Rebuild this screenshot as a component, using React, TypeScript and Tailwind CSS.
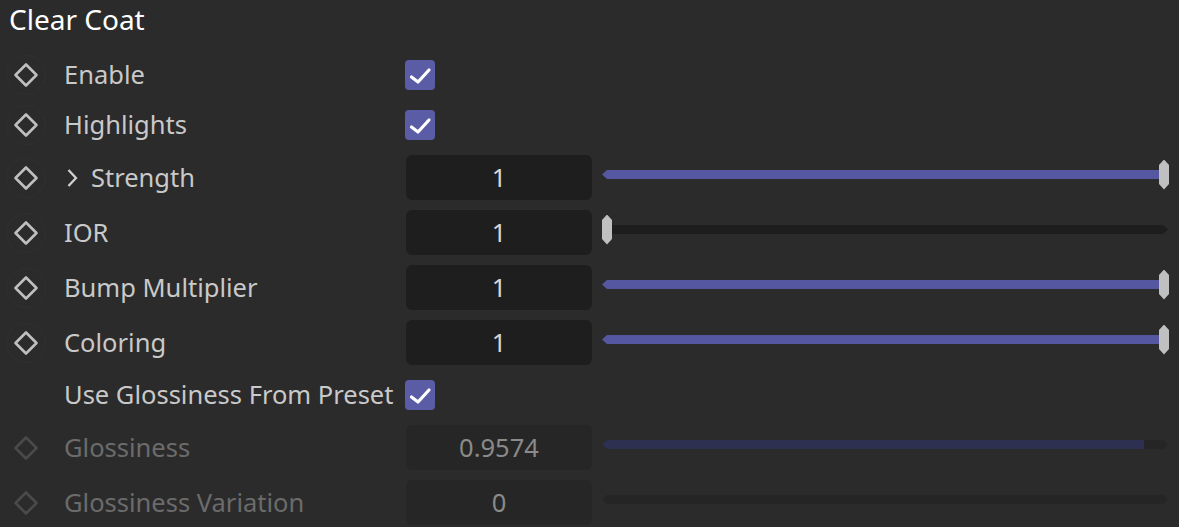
import React from "react";

type Row =
  | { kind: "check"; label: string; icon: boolean }
  | { kind: "num"; label: string; value: string; v: number; disabled?: boolean; chevron?: boolean };

const rows: Row[] = [
  { kind: "check", label: "Enable", icon: true },
  { kind: "check", label: "Highlights", icon: true },
  { kind: "num", label: "Strength", value: "1", v: 1, chevron: true },
  { kind: "num", label: "IOR", value: "1", v: 0 },
  { kind: "num", label: "Bump Multiplier", value: "1", v: 1 },
  { kind: "num", label: "Coloring", value: "1", v: 1 },
  { kind: "check", label: "Use Glossiness From Preset", icon: false },
  { kind: "num", label: "Glossiness", value: "0.9574", v: 0.9574, disabled: true },
  { kind: "num", label: "Glossiness Variation", value: "0", v: 0, disabled: true },
];

function KeyIcon({ disabled }: { disabled?: boolean }) {
  return (
    <div
      className={`w-[40px] h-[40px] rounded-full border flex items-center justify-center ${
        disabled ? "border-transparent" : "border-[#303030]"
      }`}
    >
      <svg width="26" height="26" viewBox="0 0 26 26">
        <path
          d="M13 2.5 L23.5 13 L13 23.5 L2.5 13 Z"
          fill="none"
          stroke={disabled ? "#4a4a4a" : "#bfbfbf"}
          strokeWidth="2.6"
          strokeLinejoin="round"
        />
      </svg>
    </div>
  );
}

function Check() {
  return (
    <div className="w-[30px] h-[30px] rounded-[4px] bg-[#5a5da6] flex items-center justify-center">
      <svg width="30" height="30" viewBox="0 0 30 30">
        <path d="M6.5 17 L13 22 L24 10" fill="none" stroke="#ffffff" strokeWidth="3.2" strokeLinecap="round" strokeLinejoin="round" />
      </svg>
    </div>
  );
}

function Slider({ v, disabled }: { v: number; disabled?: boolean }) {
  return (
    <div className="relative flex-1 h-[30px] mb-[6px] flex items-center">
      <div
        className={`relative w-full h-[9px] overflow-hidden [clip-path:polygon(5px_0,calc(100%-5px)_0,100%_50%,calc(100%-5px)_100%,5px_100%,0_50%)] ${
          disabled ? "bg-[#252525]" : "bg-[#1e1e1e]"
        }`}
      >
        <div
          className={`h-full ${disabled ? "bg-[#2e3052]" : "bg-[#5558a0]"}`}
          style={{ width: `${v * 100}%` }}
        />
      </div>
      {!disabled && (
        <div
          className="absolute top-0 w-[10px] h-[30px] bg-[#c0c0c0] [clip-path:polygon(50%_0,100%_18%,100%_82%,50%_100%,0_82%,0_18%)]"
          style={{ left: `calc(${v * 100}% - ${v * 9}px)` }}
        />
      )}
    </div>
  );
}

export default function App() {
  return (
    <div
      className="w-[1179px] h-[527px] overflow-hidden bg-[#2b2b2b] text-[#c9c9c9]"
      style={{ fontFamily: '"Noto Sans", "Open Sans", sans-serif' }}
    >
      <div className="h-[50px] pl-[9px] text-[28px] leading-[38px] text-white">Clear Coat</div>
      {rows.map((r, i) => {
        const disabled = r.kind === "num" && r.disabled;
        const h = r.kind === "check" ? "h-[50px]" : "h-[55px]";
        return (
          <div key={i} className={`flex items-center ${h} pr-[11px]`}>
            <div className="w-[52px] pl-[6px] flex items-center">
              {(r.kind === "num" || r.icon) && <KeyIcon disabled={disabled} />}
            </div>
            <div
              className={`w-[353px] pl-[12px] flex items-center text-[25.5px] leading-none ${
                disabled ? "text-[#6b6b6b]" : "text-[#c9c9c9]"
              }`}
            >
              {r.kind === "num" && r.chevron && (
                <svg width="14" height="22" viewBox="0 0 14 22" className="mr-[12px] ml-[1px]">
                  <path d="M3.5 3 L11 11 L3.5 19" fill="none" stroke="#d0d0d0" strokeWidth="2.3" />
                </svg>
              )}
              <span className="whitespace-nowrap">{r.label}</span>
            </div>
            {r.kind === "check" ? (
              <Check />
            ) : (
              <div className="flex-1 flex items-center gap-[10px]">
                <div
                  className={`w-[186px] h-[45px] ml-[1px] rounded-[6px] flex items-center justify-center text-[25.5px] ${
                    disabled ? "bg-[#262626] text-[#8a8a8a]" : "bg-[#1e1e1e] text-[#d6d6d6]"
                  }`}
                >
                  {r.value}
                </div>
                <Slider v={r.v} disabled={disabled} />
              </div>
            )}
          </div>
        );
      })}
    </div>
  );
}
